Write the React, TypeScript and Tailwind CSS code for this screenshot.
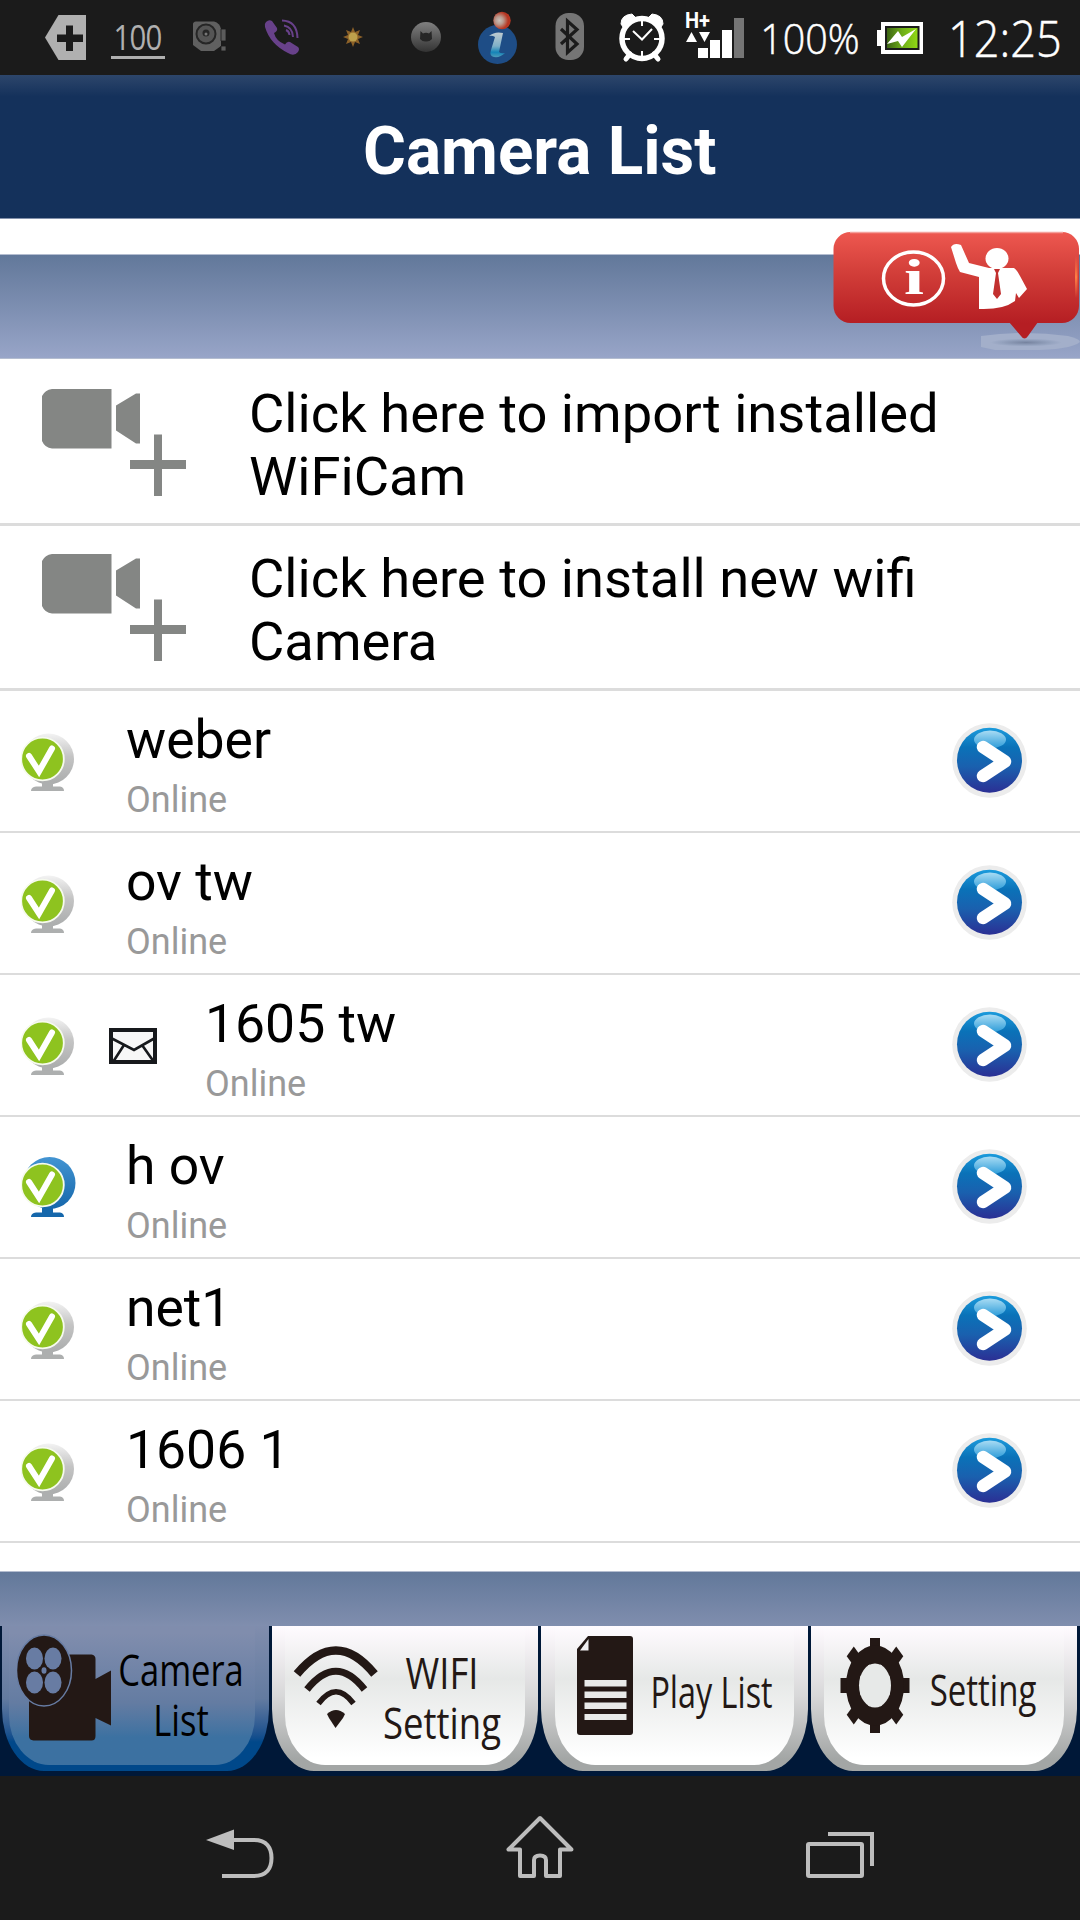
import type { ReactNode } from 'react'

interface Camera {
  name: string
  status: string
  hasMail?: boolean
  active?: boolean
}

const cameras: Camera[] = [
  { name: 'weber', status: 'Online' },
  { name: 'ov tw', status: 'Online' },
  { name: '1605 tw', status: 'Online', hasMail: true },
  { name: 'h ov', status: 'Online', active: true },
  { name: 'net1', status: 'Online' },
  { name: '1606 1', status: 'Online' },
]

function StatusBar() {
  return (
    <header className="flex h-[75px] bg-[#1b1b1b] pl-[45px] font-['Open_Sans',sans-serif] text-white">
      <svg width="41" height="75" viewBox="45 0 41 75">
        <path d="M58.500 15H86V60H58.500L45 37.500Z" fill="#b0b0b0" />
        <path d="M66 25.500H73V34.500H83V42H73V51H66V42H57V34.500H66Z" fill="#1b1b1b" />
      </svg>
      <div className="ml-[25px] flex h-[59px] w-[54px] justify-center border-b-[3px] border-[#b0b0b0] pt-[12px]">
        <span className="origin-center scale-x-[0.84] whitespace-nowrap text-[35px] leading-[50px] tracking-[-1px] text-[#b0b0b0]">100</span>
      </div>
      <svg className="ml-[28px]" width="34" height="75" viewBox="193 0 34 75">
        <path d="M196 21.500H214Q220 23 221 29V46L214 51H201L193 45V24Q193 22 196 21.500Z" fill="#606060" />
        <circle cx="206" cy="34" r="9.500" fill="#555" stroke="#262626" strokeWidth="2" />
        <circle cx="206" cy="33" r="3.500" fill="#262626" />
        <circle cx="206" cy="34" r="1.500" fill="#777" />
        <path d="M221 29H226V41H221ZM221 46H226V51H221Z" fill="#5c5c5c" stroke="#1b1b1b" strokeWidth=".8" />
      </svg>
      <svg className="ml-[37px]" width="36" height="75" viewBox="264 0 36 75">
        <path d="M266 22Q269 19 272 21L277 28Q278 31 274 33Q276 41 285 44.500Q287 41 290 42L298 47Q300 49 298 52Q294 57 288 53Q270 44 265 27Q264 24 266 22Z" fill="#68418a" />
        <path d="M282 20.500Q297 21 297.500 38M284 25.500Q292.500 27 293 37M286 30Q289 31 289.500 35" fill="none" stroke="#68418a" strokeWidth="2" />
      </svg>
      <svg className="ml-[43px]" width="20" height="75" viewBox="343 0 20 75">
        <path d="M353 27L355 32L360 30L358 35L363 37L358 39L360 44L355 42L353 47L351 42L346 44L348 39L343 37L348 35L346 30L351 32Z" fill="#8c6128" />
        <circle cx="353" cy="37" r="4.500" fill="#bda04c" />
      </svg>
      <svg className="ml-[47px]" width="32" height="75" viewBox="410 0 32 75">
        <defs>
          <linearGradient id="ball" x2="0" y2="1">
            <stop stopColor="#808080" />
            <stop offset=".5" stopColor="#5a5a5a" />
            <stop offset="1" stopColor="#333" />
          </linearGradient>
        </defs>
        <circle cx="426" cy="37" r="15" fill="url(#ball)" />
        <path d="M420.500 31L423 33.500Q426 32 429 33.500L431.500 31L432 39Q429 42 426 41.500Q423 42 420 39Z" fill="#262626" />
      </svg>
      <svg className="ml-[36px]" width="40" height="75" viewBox="478 0 40 75">
        <defs>
          <radialGradient id="infoHead" cx=".35" cy=".5">
            <stop stopColor="#c9c0ba" />
            <stop offset=".45" stopColor="#b99a8e" />
            <stop offset="1" stopColor="#b63622" />
          </radialGradient>
          <linearGradient id="infoLetter" x2="0" y2="1">
            <stop stopColor="#c0cbd0" />
            <stop offset=".55" stopColor="#7fb0c8" />
            <stop offset=".8" stopColor="#1484b8" />
            <stop offset="1" stopColor="#4d9cba" />
          </linearGradient>
        </defs>
        <ellipse cx="497.500" cy="44.500" rx="19.500" ry="19.500" fill="#1e4d86" />
        <path d="M489 36Q495 31 503 33L499 52Q501 54 505 53Q500 58 494 57Q489 56 491 50L495 37Q492 35 489 36Z" fill="url(#infoLetter)" />
        <circle cx="502" cy="20.500" r="8.700" fill="url(#infoHead)" />
      </svg>
      <svg className="ml-[37px]" width="30" height="75" viewBox="555 0 30 75">
        <rect x="555.500" y="13" width="28.500" height="47" rx="13" fill="#757575" />
        <path d="M561 29L577 44L567.500 52.500V21L577 29.500L561 44" fill="none" stroke="#1b1b1b" strokeWidth="3.200" />
      </svg>
      <svg className="ml-[33px]" width="48" height="75" viewBox="618 0 48 75">
        <circle cx="642" cy="38.500" r="20" fill="none" stroke="#fff" strokeWidth="5.500" />
        <path d="M621 24Q621 15 632 14L635 17L623 27ZM663 24Q663 15 652 14L649 17L661 27Z" fill="#fff" stroke="#fff" strokeWidth="1" />
        <path d="M630 54L626 59M654 54L658 59" stroke="#fff" strokeWidth="5" strokeLinecap="round" />
        <path d="M633 31L642 39.500L652 29M642 21V26M642 51V57M624 39H630M654 39H660" fill="none" stroke="#fff" strokeWidth="2" />
      </svg>
      <svg className="ml-[19px]" width="60" height="75" viewBox="685 0 60 75">
        <text x="685" y="28" fontFamily="Roboto, sans-serif" fontWeight="700" fontSize="22" fill="#fff" textLength="25" lengthAdjust="spacingAndGlyphs">H+</text>
        <path d="M686 42L691.500 32L697 42ZM699 32H710L704.500 42Z" fill="#fff" />
        <path d="M698 48H708V58H698ZM710 40H720V58H710ZM722 30H732V58H722Z" fill="#fff" />
        <path d="M734 18H744V58H734Z" fill="#757575" />
      </svg>
      <div className="ml-[17px] flex w-[96px] justify-center">
        <span className="origin-center scale-x-[0.94] whitespace-nowrap text-[42px] leading-[76px] font-light [-webkit-text-stroke:0.5px_white]">100%</span>
      </div>
      <svg className="ml-[19px]" width="46" height="75" viewBox="877 0 46 75">
        <defs>
          <linearGradient id="charge" x2="1" y2="0">
            <stop stopColor="#3c6413" />
            <stop offset=".5" stopColor="#6fae18" />
            <stop offset="1" stopColor="#90d815" />
          </linearGradient>
        </defs>
        <path d="M881 22H923V54H881V46H877V30H881Z" fill="#fff" />
        <path d="M885 26H919.500V50H885Z" fill="#1b1b1b" />
        <path d="M887 28H917.500V48H887Z" fill="url(#charge)" />
        <path d="M887 44L898 31L902 37L916 29L902 47L898 41Z" fill="#fff" />
      </svg>
      <div className="ml-[26px] flex w-[112px] justify-center">
        <span className="origin-center scale-x-[0.92] whitespace-nowrap text-[49px] leading-[77px] font-light [-webkit-text-stroke:0.5px_white]">12:25</span>
      </div>
    </header>
  )
}

function HelpBubble() {
  return (
    <svg className="absolute top-[-25px] right-0" width="248" height="121" viewBox="832 230 248 121">
      <defs>
        <linearGradient id="bubble" x2="0" y2="1">
          <stop stopColor="#ee5850" />
          <stop offset=".45" stopColor="#d23e39" />
          <stop offset="1" stopColor="#b51e23" />
        </linearGradient>
        <radialGradient id="bubbleShadow">
          <stop stopColor="#76839f" />
          <stop offset=".7" stopColor="#95a3bf" />
          <stop offset="1" stopColor="#a3afca" />
        </radialGradient>
        <linearGradient id="glow" x2="0" y2="1">
          <stop stopColor="#ff7d45" stopOpacity="0" />
          <stop offset=".5" stopColor="#ff7d45" />
          <stop offset="1" stopColor="#ff7d45" stopOpacity="0" />
        </linearGradient>
      </defs>
      <path d="M981 336Q1024 330 1068 336Q1080 339 1080 342Q1070 350 1030 350H995L981 347Z" fill="#a3afca" />
      <ellipse cx="1026" cy="342.500" rx="36" ry="4" fill="url(#bubbleShadow)" />
      <path d="M1009 322H1038L1028 336Q1024.500 341 1021 336Z" fill="#b51e23" />
      <rect x="833.500" y="232" width="245.500" height="91" rx="17" fill="url(#bubble)" />
      <path d="M850 232.500H1063" stroke="#f4a09b" strokeWidth="1.500" />
      <path d="M1075 256H1077.500V298H1075Z" fill="url(#glow)" />
      <ellipse cx="913.500" cy="278.500" rx="30" ry="26.500" fill="none" stroke="#fff" strokeWidth="3.500" />
      <text x="904" y="294" fontFamily="Liberation Serif, serif" fontWeight="700" fontSize="51" fill="#fff" textLength="20" lengthAdjust="spacingAndGlyphs">i</text>
      <ellipse cx="997" cy="258.500" rx="11.500" ry="10.500" fill="#fff" />
      <path d="M951 247Q954 242 961 245L969 263L989 268H1014Q1017 270 1020 276L1027 289L1019 298L1016 293L1015 301Q1003 310 979 309V277L960 272Q958 269 956 263Z" fill="#fff" />
      <path d="M994 269H1000L998 273L1001 294L997 299L993 294L996 273Z" fill="#c2302f" />
    </svg>
  )
}

function AddCameraRow({ children }: { children: ReactNode }) {
  return (
    <li className="flex h-[165px] border-b-[3px] border-[#dcdcdc] pl-[42px]">
      <svg className="mt-[27px] shrink-0" width="144" height="109" viewBox="42 388 144 109" fill="#848684">
        <path d="M52 389H111.500V448.500H52Q45 448 42 441V396Q45 390 52 389ZM140 393.500V443.500H136L116 430.500V405.500L136 393.500Z" />
        <path d="M154 434.500H162V460H186V469H162V496H154V469H130V460H154Z" />
      </svg>
      <p className="mt-[21px] ml-[63px] origin-left scale-x-[1.006] whitespace-nowrap text-[54px] leading-[63px]">{children}</p>
    </li>
  )
}

function WebcamIcon({ active }: { active?: boolean }) {
  return (
    <svg className="mt-[39px] shrink-0" width="55" height="64" viewBox="21 730 55 64">
      <defs>
        <linearGradient id="camGray" x2="0" y2="1">
          <stop stopColor="#f3f3f3" />
          <stop offset=".45" stopColor="#c4c4c4" />
          <stop offset="1" stopColor="#aaacac" />
        </linearGradient>
        <linearGradient id="camBlue" x2="0" y2="1">
          <stop stopColor="#4394d2" />
          <stop offset="1" stopColor="#1567ab" />
        </linearGradient>
      </defs>
      {active ? (
        <circle cx="49.500" cy="757" r="26" fill="url(#camBlue)" />
      ) : (
        <circle cx="48.500" cy="759" r="25.500" fill="url(#camGray)" />
      )}
      <path d="M42 782H53V786.500H60Q64 787 64 791H31Q31 787 36 786.500H42Z" fill={active ? '#1567ab' : '#adafaf'} />
      <circle cx="42.500" cy="759" r="21.300" fill="#8ec31f" stroke="#f6faee" strokeWidth="1.800" />
      <path d="M29 756L39 771.500L52 748.500" fill="none" stroke="#fff" strokeWidth="6" strokeLinecap="round" />
    </svg>
  )
}

function MailIcon() {
  return (
    <svg className="mt-[53px] ml-[33px] shrink-0" width="48" height="36" viewBox="0 0 48 36">
      <rect x="2" y="2" width="44" height="32" fill="#f7f7f7" stroke="#17191c" strokeWidth="4" />
      <path d="M2 10L25 22L46 10M4 34L15 17M45 34L33 17" fill="none" stroke="#17191c" strokeWidth="2.600" />
    </svg>
  )
}

function ArrowButton() {
  return (
    <button type="button" className="mt-[32px] ml-auto h-[75px]">
      <svg width="75" height="75" viewBox="0 0 75 75">
        <defs>
          <linearGradient id="arrowBlue" x2="0" y2="1">
            <stop stopColor="#1b9bdc" />
            <stop offset=".3" stopColor="#0a72b8" />
            <stop offset=".6" stopColor="#1a60ae" />
            <stop offset="1" stopColor="#2b2f94" />
          </linearGradient>
          <linearGradient id="arrowShine" x2="0" y2="1">
            <stop stopColor="#a9dcf4" />
            <stop offset="1" stopColor="#2b9bd8" />
          </linearGradient>
        </defs>
        <circle cx="37.500" cy="37.500" r="37.300" fill="#ececec" />
        <circle cx="37.500" cy="37.300" r="32.500" fill="url(#arrowBlue)" />
        <ellipse cx="38" cy="16.500" rx="16" ry="9" fill="url(#arrowShine)" />
        <path d="M31 24L53 38.500L31 53" fill="none" stroke="#fff" strokeWidth="12.500" strokeLinecap="round" strokeLinejoin="round" />
      </svg>
    </button>
  )
}

function CameraRow({ camera }: { camera: Camera }) {
  return (
    <li className="flex h-[142px] border-b-2 border-[#dcdcdc] pr-[53px] pl-[21px]">
      <WebcamIcon active={camera.active} />
      {camera.hasMail && <MailIcon />}
      <div className={camera.hasMail ? 'ml-[48px]' : 'ml-[50px]'}>
        <p className="mt-[17px] origin-left scale-x-[0.99] text-[54px] leading-[64px]">{camera.name}</p>
        <p className="mt-[7px] text-[36px] leading-[42px] text-[#999]">{camera.status}</p>
      </div>
      <ArrowButton />
    </li>
  )
}

// Bottom tabs

function Tab({ selected, children }: { selected?: boolean; children: ReactNode }) {
  const shape = 'h-[145px] rounded-[0_0_42px_42px/0_0_62px_62px] bg-linear-to-b'
  const panel = 'flex h-[139px] rounded-[0_0_40px_40px/0_0_50px_50px] bg-linear-to-b'

  if (selected) {
    return (
      <div className={`${shape} from-[#808dad] via-[#637ba0] via-50% to-[#00488a] to-80% pr-[14px] pl-[7px]`}>
        <div className={`${panel} from-[#808dad] from-5% via-[#647ca2] via-55% to-[#3c71a1] to-80%`}>{children}</div>
      </div>
    )
  }

  return (
    <div className={`${shape} from-[#fffbff] via-[#d8d8d9] via-48% to-[#a3a6a5] to-92% px-[13.5px]`}>
      <div className={`${panel} from-[#fffbff] via-[#e6e8e7] via-38% to-white to-95%`}>{children}</div>
    </div>
  )
}

function Label({ className, children }: { className: string; children: ReactNode }) {
  return (
    <div className={`${className} flex justify-center text-center whitespace-nowrap`}>
      <p>{children}</p>
    </div>
  )
}

function TabBar() {
  return (
    <nav className="grid h-[150px] grid-cols-4 gap-x-[3px] bg-[#001838] pr-[3px] pl-[2px] font-['Open_Sans',sans-serif] text-[44px] leading-[50px] text-[#231815]">
      <Tab selected>
        <svg className="ml-[8px] shrink-0" width="95" height="139" viewBox="17.500 1626 95 139">
          <path d="M70 1654.500H92Q96 1655 96 1659V1679L111.500 1670.500V1725.500L96 1718V1736Q96 1740.500 92 1740.500H34Q29.500 1740 29.500 1736V1700Z" fill="#231815" />
          <ellipse cx="44.500" cy="1670.500" rx="27.500" ry="35.500" fill="#231815" stroke="#677ca3" strokeWidth="1.500" />
          <g fill="#687ca3">
            <ellipse cx="35" cy="1658.500" rx="8.500" ry="11" />
            <ellipse cx="53.500" cy="1658.500" rx="8.500" ry="11" />
            <ellipse cx="35" cy="1682.500" rx="8.500" ry="11" />
            <ellipse cx="53.500" cy="1682.500" rx="8.500" ry="11" />
            <ellipse cx="44.500" cy="1670.500" rx="2.500" ry="3.300" />
          </g>
        </svg>
        <Label className="mt-[18px] ml-[7px] w-[124px] scale-x-[0.785] text-black">
          Camera
          <br />
          List
        </Label>
      </Tab>
      <Tab>
        <svg className="ml-[8px] shrink-0" width="86" height="139" viewBox="293 1626 86 139">
          <g fill="none" stroke="#231815">
            <path d="M297 1674Q336 1627 374.500 1674" strokeWidth="8.500" />
            <path d="M307 1689.500Q336 1653 364.500 1689.500" strokeWidth="7" />
            <path d="M318.500 1703.500Q336 1680 353.500 1703.500" strokeWidth="5.500" />
          </g>
          <path d="M327 1714Q336 1706 345 1714L343 1718L335.500 1728L329 1718Z" fill="#231815" />
        </svg>
        <Label className="mt-[21px] ml-[6px] w-[114px] scale-x-[0.83]">
          WIFI
          <br />
          Setting
        </Label>
      </Tab>
      <Tab>
        <svg className="ml-[22.5px] shrink-0" width="56" height="139" viewBox="577 1626 56 139">
          <path d="M588 1636H630Q633 1636 633 1639V1732Q633 1735 630 1735H580Q577 1735 577 1732V1649Z" fill="#231815" />
          <path d="M588.500 1639V1650.500H580Z" fill="#f0eef0" />
          <path d="M584.500 1680H626.500V1686.500H584.500ZM584.500 1691.500H626.500V1698H584.500ZM584.500 1702.500H626.500V1709H584.500ZM584.500 1714H626.500V1720H584.500Z" fill="#e8eae9" />
        </svg>
        <Label className="mt-[40px] ml-[17px] w-[123px] scale-x-[0.735]">Play List</Label>
      </Tab>
      <Tab>
        <svg className="ml-[16px] shrink-0" width="70" height="139" viewBox="840 1626 70 139" fill="#231815">
          <g transform="translate(875 1685.500) scale(1 1.380)">
            <path d="M-5 -34.500H5V34.500H-5ZM-34.500 -5.500H34.500V5.500H-34.500Z" />
            <path d="M-5 -35H5V35H-5Z" transform="rotate(45)" />
            <path d="M-5 -35H5V35H-5Z" transform="rotate(-45)" />
            <circle r="22.500" fill="none" stroke="#231815" strokeWidth="13" />
            <circle r="16" fill="#e7e9e8" />
          </g>
        </svg>
        <Label className="mt-[38px] ml-[20px] w-[106px] scale-x-[0.75]">Setting</Label>
      </Tab>
    </nav>
  )
}

function SystemNav() {
  return (
    <footer className="flex h-[144px] items-start bg-[#1b1b1b] pt-[38px] pl-[205px]">
      <svg width="70" height="66" viewBox="205 1814 70 66">
        <path d="M206 1840L234 1829.500V1850Z" fill="#bdbdbd" />
        <path d="M233 1840H254C267 1840 271.500 1848 271.500 1858C271.500 1868 267 1876 254 1876H222" fill="none" stroke="#bdbdbd" strokeWidth="4" />
      </svg>
      <svg className="ml-[230px]" width="70" height="66" viewBox="505 1814 70 66">
        <path d="M540 1818L508.500 1849.500H520V1876H534V1860Q534 1855.500 540 1855.500Q546 1855.500 546 1860V1876H560V1849.500H571.500Z" fill="none" stroke="#bdbdbd" strokeWidth="4" strokeLinejoin="round" />
      </svg>
      <svg className="ml-[230px]" width="70" height="66" viewBox="805 1814 70 66">
        <rect x="808" y="1844" width="54" height="32" rx="1" fill="none" stroke="#bdbdbd" strokeWidth="4" />
        <path d="M828 1834H872V1866" fill="none" stroke="#bdbdbd" strokeWidth="4" />
      </svg>
    </footer>
  )
}

export default function App() {
  return (
    <div className="flex h-[1920px] w-[1080px] flex-col overflow-hidden bg-white font-['Roboto',sans-serif] text-black">
      <StatusBar />
      <div className="flex h-[144px] justify-center border-b border-[#8391ab] bg-linear-to-b from-[#2d466b] to-[#14315b] to-15%">
        <h1 className="mt-[39px] scale-x-[0.994] whitespace-nowrap text-[66px] leading-[76px] font-bold text-white">Camera List</h1>
      </div>
      <div className="relative mt-[35px] h-[105px] border-y border-[#b4bdd0] bg-linear-to-b from-[#62789a] to-[#98a5c8]">
        <HelpBubble />
      </div>
      <ul className="h-[1212px] pt-[2px]">
        <AddCameraRow>
          Click here to import installed
          <br />
          WiFiCam
        </AddCameraRow>
        <AddCameraRow>
          Click here to install new wifi
          <br />
          Camera
        </AddCameraRow>
        {cameras.map((camera) => (
          <CameraRow key={camera.name} camera={camera} />
        ))}
      </ul>
      <div className="h-[55px] border-t border-[#b4bdd0] bg-linear-to-b from-[#62789a] to-[#808eae]" />
      <TabBar />
      <SystemNav />
    </div>
  )
}
